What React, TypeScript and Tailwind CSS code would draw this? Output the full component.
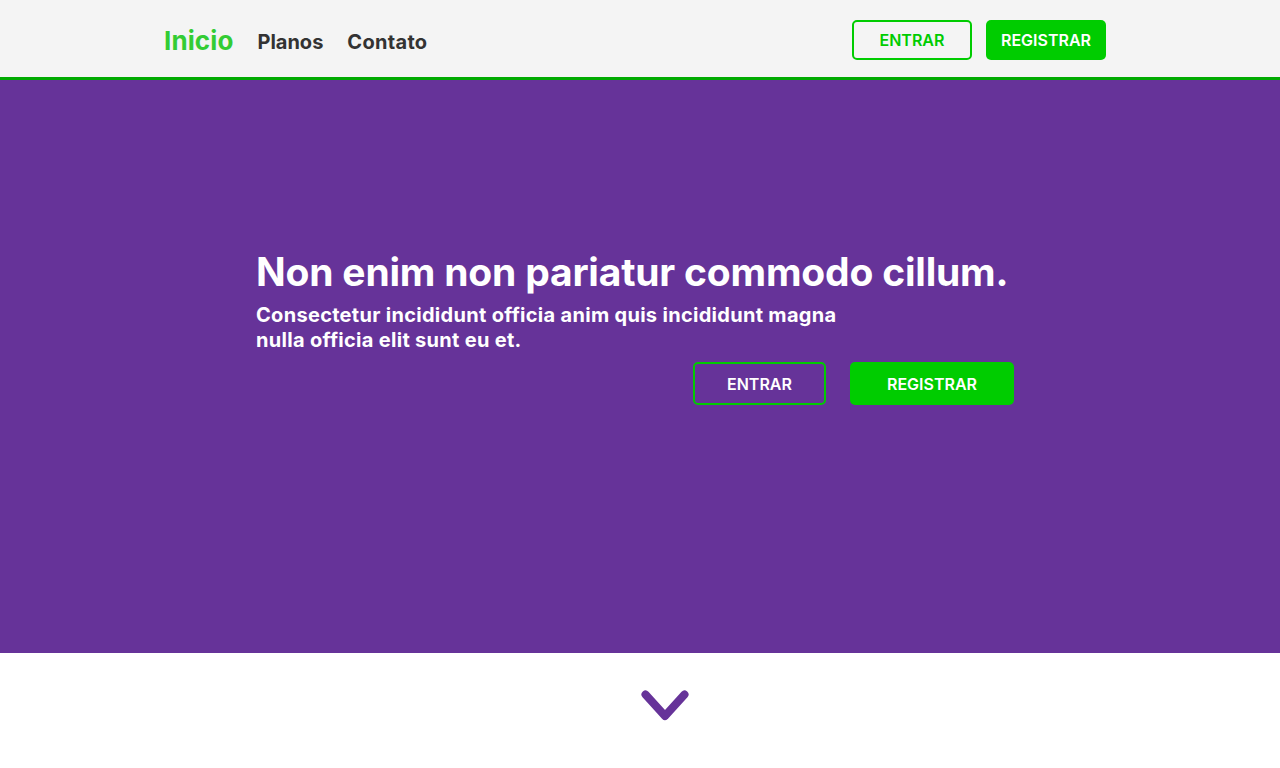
const FONT = "font-['Inter','Noto_Sans',sans-serif]";

export default function App() {
  return (
    <div className={`min-h-screen bg-white ${FONT}`}>
      {/* top nav */}
      <header className="h-[80px] bg-[#f4f4f4] border-b-[3px] border-[#00aa00]">
        <div className="w-[942px] ml-[164px] h-full flex items-center justify-between pt-[3px]">
          <nav className="flex items-center gap-6">
            <a className="text-[26px] font-bold text-[#33cc33] tracking-[0.1px]">Inicio</a>
            <a className="text-[20px] font-bold text-[#333333] mt-[3px]">Planos</a>
            <a className="text-[20px] font-bold text-[#333333] mt-[3px] tracking-[0.3px]">Contato</a>
          </nav>
          <div className="flex items-center gap-[14px]">
            <button className="w-[120px] h-[40px] rounded-[5px] border-2 border-[#00cc00] text-[#00cc00] text-[16px] font-semibold">
              ENTRAR
            </button>
            <button className="w-[120px] h-[40px] rounded-[5px] bg-[#00cc00] text-white text-[16px] font-semibold">
              REGISTRAR
            </button>
          </div>
        </div>
      </header>

      {/* hero */}
      <section className="h-[573px] bg-[#663399] pt-[168px]">
        <div className="ml-[256px] w-[758px] text-white">
          <h1 className="text-[39px] leading-[48px] font-bold tracking-[-0.2px]">
            Non enim non pariatur commodo cillum.
          </h1>
          <p className="mt-[7px] w-[620px] text-[20px] leading-[25px] font-bold tracking-[0.3px]">
            Consectetur incididunt officia anim quis incididunt magna nulla officia elit sunt eu et.
          </p>
          <div className="mt-[9px] flex justify-end gap-6">
            <button className="w-[133px] h-[43px] rounded-[5px] border-2 border-[#00cc00] text-white text-[16px] font-semibold">
              ENTRAR
            </button>
            <button className="w-[164px] h-[43px] rounded-[5px] bg-[#00cc00] text-white text-[16px] font-semibold">
              REGISTRAR
            </button>
          </div>
        </div>
      </section>

      {/* scroll hint */}
      <div className="flex pt-[37px] pl-[641px]">
        <svg width="48" height="32" viewBox="0 0 48 32" fill="none">
          <polyline
            points="4.5,4.5 24,26 43.5,4.5"
            stroke="#663399"
            strokeWidth="8"
            strokeLinecap="round"
            strokeLinejoin="round"
          />
        </svg>
      </div>
    </div>
  );
}
